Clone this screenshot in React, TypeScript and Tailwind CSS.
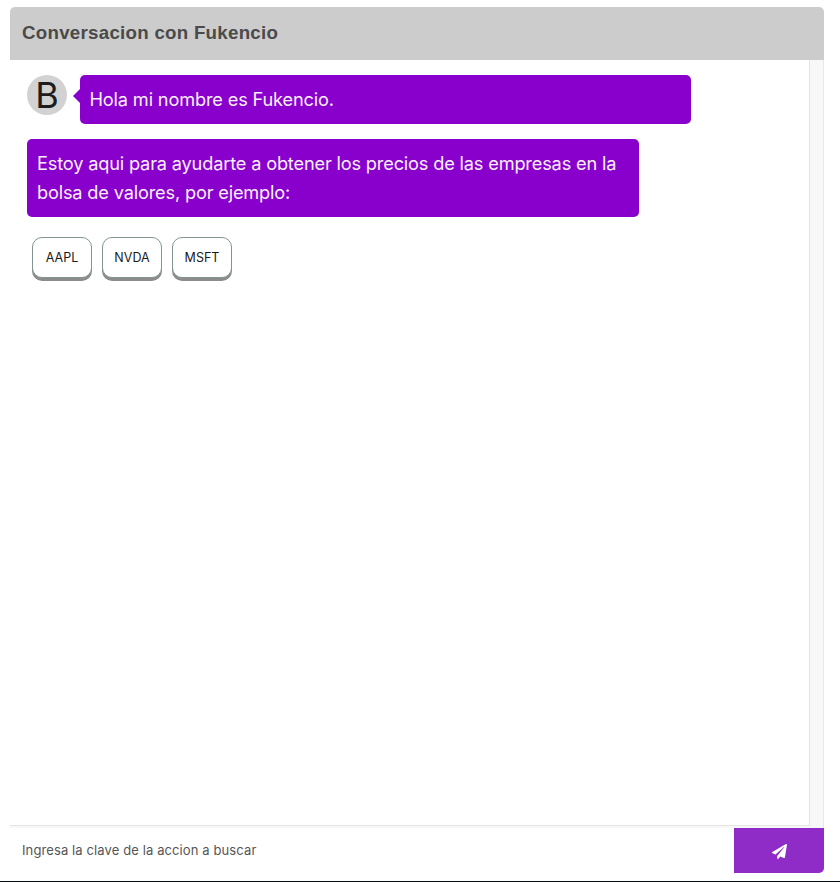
import { FaPaperPlane } from "react-icons/fa";

const tickers = ["AAPL", "NVDA", "MSFT"];

export default function App() {
  return (
    <div className="flex h-[882px] w-[840px] flex-col overflow-hidden border-b border-[#050b12] bg-white pl-[10px] pr-4 pt-[7px] font-['Inter',sans-serif] antialiased">
      <section className="flex h-[866px] flex-col overflow-hidden rounded-[5px]">
        <header className="flex h-[53px] shrink-0 items-center bg-[#cccccc] px-3 pb-[2px]">
          <h1 className="font-['Liberation_Sans',sans-serif] text-[18.72px] font-bold leading-6 tracking-[0.27px] text-[#4a4a4a]">
            Conversacion con Fukencio
          </h1>
        </header>

        <div className="flex min-h-0 flex-1 flex-col border-r border-[#e8e8e8] bg-[#f8f8f8] pb-[2px]">
          <main className="mr-[13px] flex-1 border-b border-r border-[#e4e4e4] bg-white pl-[17px] pt-[15px]">
            <div className="flex items-start">
              <div className="flex size-10 items-center justify-center rounded-full bg-[#d2d2d2] text-[36px] leading-10 text-[#1d1d1f]">
                B
              </div>
              <div className="ml-[6px] mt-[14px] h-0 w-0 border-y-[7px] border-r-[7px] border-y-transparent border-r-[#8900cc]" />
              <p className="h-[49px] w-[611px] rounded-[5px] bg-[#8900cc] py-[10px] pl-[9.5px] text-[18.2px] leading-[29px] tracking-[-0.16px] text-[#f8efff]">
                Hola mi nombre es Fukencio.
              </p>
            </div>

            <p className="mt-[15px] h-[78px] w-[612px] whitespace-nowrap rounded-[5px] bg-[#8900cc] p-[10px] text-[18.2px] leading-[29px] tracking-[-0.17px] text-[#f8efff]">
              Estoy aqui para ayudarte a obtener los precios de las empresas en la
              <br />
              bolsa de valores, por ejemplo:
            </p>

            <div className="ml-[5px] mt-5 flex gap-[10px]">
              {tickers.map((ticker) => (
                <button
                  key={ticker}
                  className="h-[41px] w-[60px] rounded-[10px] border border-[#849494] bg-white pt-[2px] text-[12.5px] text-[#1a1a1a] shadow-[0_3px_0_#8c8c8c]"
                >
                  {ticker}
                </button>
              ))}
            </div>
          </main>
        </div>

        <form className="flex h-[45px] shrink-0">
          <input
            className="min-w-0 flex-1 bg-white px-3 text-[13px] tracking-[0.11px] outline-none placeholder:text-[#555555]"
            placeholder="Ingresa la clave de la accion a buscar"
          />
          <button
            type="button"
            aria-label="Enviar"
            className="flex w-[90px] items-center justify-center bg-[#8f2bc6] pt-[2px] text-white"
          >
            <FaPaperPlane size={15} />
          </button>
        </form>
      </section>
    </div>
  );
}
